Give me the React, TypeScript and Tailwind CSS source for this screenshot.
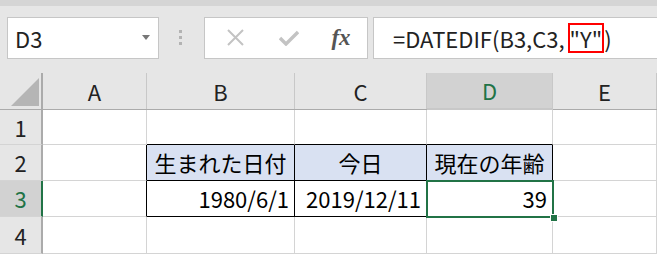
import React from "react";

const font = { fontFamily: '"Noto Sans CJK JP", "Noto Sans", sans-serif' };

const cols = ["A", "B", "C", "D", "E"];

type Cell = {
  text?: string;
  align?: "left" | "center" | "right";
  fill?: boolean;
  right?: boolean;
  bottom?: boolean;
};

// row data: index 0 = A ... 4 = E
const rows: { num: number; h: string; cells: Cell[] }[] = [
  {
    num: 1,
    h: "h-[35px]",
    cells: [{}, { bottom: true }, { bottom: true }, { bottom: true }, {}],
  },
  {
    num: 2,
    h: "h-[36px]",
    cells: [
      { right: true },
      { text: "生まれた日付", align: "center", fill: true, right: true, bottom: true },
      { text: "今日", align: "center", fill: true, right: true, bottom: true },
      { text: "現在の年齢", align: "center", fill: true, right: true, bottom: true },
      {},
    ],
  },
  {
    num: 3,
    h: "h-[36px]",
    cells: [
      { right: true },
      { text: "1980/6/1", align: "right", right: true, bottom: true },
      { text: "2019/12/11", align: "right", right: true, bottom: true },
      { text: "39", align: "right", right: true, bottom: true },
      {},
    ],
  },
  { num: 4, h: "h-[37px]", cells: [{}, {}, {}, {}, {}] },
];

function Toolbar() {
  return (
    <div className="bg-[#e6e6e6]">
      <div className="h-[6px] bg-[#d5d5d5]" />
      <div className="flex items-center h-[67px] pb-[4px] pl-[7px]">
        {/* name box */}
        <div className="flex items-center justify-between w-[152px] h-[42px] bg-white border border-[#c6c6c6] pl-[7px] pr-[8px]">
          <span className="text-[22px] text-[#222] leading-none" style={font}>
            D3
          </span>
          <svg width="8" height="5" viewBox="0 0 8 5">
            <path d="M0 0 H8 L4 5 Z" fill="#777" />
          </svg>
        </div>
        {/* dots */}
        <div className="flex flex-col gap-[3px] ml-[20px] mr-[22px]">
          <div className="w-[3px] h-[3px] bg-[#b3b3b3]" />
          <div className="w-[3px] h-[3px] bg-[#b3b3b3]" />
          <div className="w-[3px] h-[3px] bg-[#b3b3b3]" />
        </div>
        {/* cancel / enter / fx */}
        <div className="flex items-center w-[164px] h-[42px] bg-white border border-[#c6c6c6]">
          <div className="w-[58px] flex justify-center pl-[3px]">
            <svg width="17" height="17" viewBox="0 0 17 17">
              <path d="M1 1 L16 16 M16 1 L1 16" stroke="#c3c3c3" strokeWidth="2" />
            </svg>
          </div>
          <div className="w-[52px] flex justify-center">
            <svg width="20" height="16" viewBox="0 0 20 16">
              <path d="M1 8 L7 14 L19 2" stroke="#c3c3c3" strokeWidth="3.4" fill="none" />
            </svg>
          </div>
          <div className="flex-1 flex justify-center">
            <span
              className="italic font-bold text-[23px] text-[#555] leading-none"
              style={{ fontFamily: '"Liberation Serif", "DejaVu Serif", serif' }}
            >
              fx
            </span>
          </div>
        </div>
        {/* formula */}
        <div className="flex items-center flex-1 h-[42px] ml-[5px] bg-white border border-r-0 border-[#c6c6c6] pl-[19px]">
          <span className="text-[22px] text-[#222] leading-none whitespace-nowrap" style={font}>
            =DATEDIF(B3,C3,
            <span className="inline-block ml-[3px] py-[2px] border-2 border-[#ff0000] -my-[4px]">"Y"</span>)
          </span>
        </div>
      </div>
    </div>
  );
}

function HeaderRow() {
  return (
    <div className="grid grid-cols-[43px_104px_148px_132px_126px_1fr] h-[37px] bg-[#e6e6e6] border-b border-[#ababab]">
      <div className="relative border-r-2 border-[#ababab]">
        <svg className="absolute left-[11px] top-[5px]" width="28" height="28" viewBox="0 0 28 28">
          <path d="M28 0 V28 H0 Z" fill="#b5b5b5" />
        </svg>
      </div>
      {cols.map((c) => {
        const sel = c === "D";
        return (
          <div
            key={c}
            className={`flex items-center justify-center text-[22px] ${
              sel
                ? "bg-[#d2d2d2] text-[#217346] border-b-2 border-[#217346] -mb-px"
                : "text-[#222]"
            } border-r border-[#c8c8c8]`}
            style={font}
          >
            {c}
          </div>
        );
      })}
    </div>
  );
}

function Grid() {
  return (
    <div className="relative">
      {rows.map((r) => (
        <div key={r.num} className={`grid grid-cols-[43px_104px_148px_132px_126px_1fr] ${r.h}`}>
          <div
            className={`flex items-center justify-center text-[22px] border-b border-[#d4d4d4] ${
              r.num === 3
                ? "bg-[#d2d2d2] text-[#217346] border-r-2 border-r-[#217346]"
                : "bg-[#e6e6e6] text-[#222] border-r-2 border-r-[#ababab]"
            }`}
            style={font}
          >
            {r.num}
          </div>
          {r.cells.map((cell, i) => (
            <div
              key={i}
              className={`flex items-center text-[22px] text-black whitespace-nowrap border-r border-b ${
                cell.right ? "border-r-black" : "border-r-[#d4d4d4]"
              } ${cell.bottom ? "border-b-black" : "border-b-[#d4d4d4]"} ${
                cell.fill ? "bg-[#d9e1f2]" : "bg-white"
              } ${
                cell.align === "center"
                  ? "justify-center"
                  : cell.align === "right"
                  ? "justify-end pr-[5px]"
                  : ""
              }`}
              style={font}
            >
              {cell.text}
            </div>
          ))}
        </div>
      ))}
      {/* active cell D3 */}
      <div className="absolute left-[426px] top-[70px] w-[128px] h-[38px] border-2 border-[#217346] pointer-events-none" />
      <div className="absolute left-[550px] top-[104px] w-[6px] h-[6px] bg-[#217346] border border-white box-content" />
    </div>
  );
}

export default function App() {
  return (
    <div className="w-[657px] h-[254px] overflow-hidden bg-white">
      <Toolbar />
      <HeaderRow />
      <Grid />
    </div>
  );
}
